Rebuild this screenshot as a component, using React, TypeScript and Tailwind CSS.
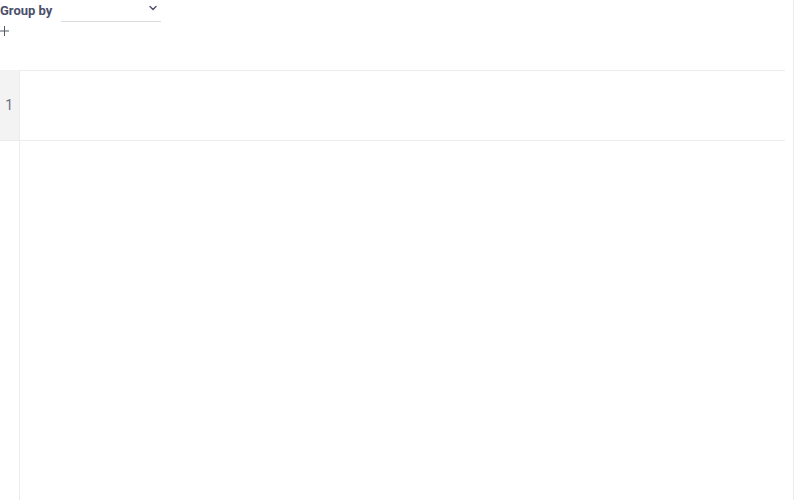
import React from "react";

const Chevron = () => (
  <svg width="10" height="10" viewBox="0 0 10 10" fill="none">
    <path d="M2 3.5l3 3 3-3" stroke="#4b4f6b" strokeWidth="1.4" strokeLinecap="round" strokeLinejoin="round" />
  </svg>
);

const Plus = () => (
  <svg width="10" height="10" viewBox="0 0 10 10" fill="none">
    <path d="M4.5 0v10M0 5h9" stroke="#55586a" strokeWidth="1" />
  </svg>
);

const App = () => {
  return (
    <div
      className="h-[500px] w-[800px] overflow-hidden bg-white"
      style={{ fontFamily: "Roboto, 'Noto Sans', sans-serif" }}
    >
      <div className="flex h-full w-[794px] flex-col border-r border-[#ececec]">
        <div className="flex h-[22px] items-center">
          <span className="w-[61px] text-[13px] font-bold text-[#4b4f6b]">Group by</span>
          <div className="flex h-[22px] w-[100px] items-start justify-end border-b border-[#dcdcdc] pr-[3px] pt-[3px]">
            <Chevron />
          </div>
        </div>
        <div className="flex h-[18px] items-center">
          <Plus />
        </div>

        <div className="mt-[30px] flex w-[785px] flex-1 flex-col">
          <div className="flex h-[71px] border-b border-[#ececec]">
            <div className="flex w-[20px] items-center justify-end border-r border-[#ececec] bg-[#f3f3f3] pr-[6px] text-[14px] text-[#6e6e82]">
              1
            </div>
            <div className="flex-1 border-t border-[#ececec]" />
          </div>
          <div className="flex flex-1">
            <div className="w-[20px] border-r border-[#ececec]" />
            <div className="flex-1" />
          </div>
        </div>
      </div>
    </div>
  );
};

export default App;
